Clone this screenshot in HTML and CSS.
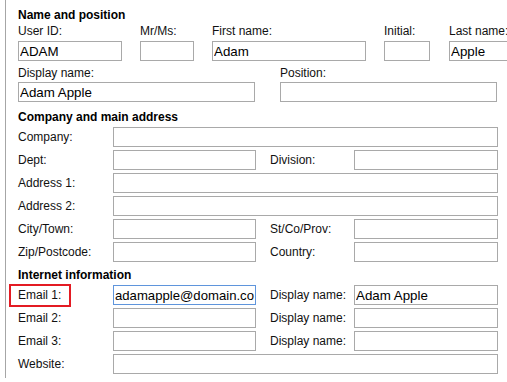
FILE: index.html
```html
<!DOCTYPE html>
<html>
<head>
<meta charset="utf-8">
<link rel="stylesheet" href="styles.css">
</head>
<body>
<div class="panel">
  <div class="section-title">Name and position</div>
  <div class="name-row">
    <div class="field w-userid"><label>User ID:</label><input class="box" value="ADAM"></div>
    <div class="field w-title"><label>Mr/Ms:</label><input class="box" value=""></div>
    <div class="field w-first"><label>First name:</label><input class="box" value="Adam"></div>
    <div class="field w-initial"><label>Initial:</label><input class="box" value=""></div>
    <div class="field w-last"><label>Last name:</label><input class="box" value="Apple"></div>
  </div>
  <div class="display-row">
    <div class="field w-display"><label>Display name:</label><input class="box" value="Adam Apple"></div>
    <div class="field w-position"><label>Position:</label><input class="box" value=""></div>
  </div>

  <div class="section-title mt-company">Company and main address</div>
  <div class="form-grid">
    <label class="lbl">Company:</label><input class="box span3" value="">
    <label class="lbl">Dept:</label><input class="box" value=""><label class="lbl lbl2">Division:</label><input class="box" value="">
    <label class="lbl">Address 1:</label><input class="box span3" value="">
    <label class="lbl">Address 2:</label><input class="box span3" value="">
    <label class="lbl">City/Town:</label><input class="box" value=""><label class="lbl lbl2">St/Co/Prov:</label><input class="box" value="">
    <label class="lbl">Zip/Postcode:</label><input class="box" value=""><label class="lbl lbl2">Country:</label><input class="box" value="">
  </div>

  <div class="section-title mt-internet">Internet information</div>
  <div class="form-grid">
    <label class="lbl highlighted">Email 1:</label><input class="box focused" value="adamapple@domain.co"><label class="lbl lbl2">Display name:</label><input class="box" value="Adam Apple">
    <label class="lbl">Email 2:</label><input class="box" value=""><label class="lbl lbl2">Display name:</label><input class="box" value="">
    <label class="lbl">Email 3:</label><input class="box" value=""><label class="lbl lbl2">Display name:</label><input class="box" value="">
    <label class="lbl">Website:</label><input class="box span3" value="">
  </div>
</div>
</body>
</html>
```
FILE: styles.css
```css
html, body {
  margin: 0;
  padding: 0;
  background: #fff;
  overflow: hidden;
}
body {
  font-family: "Liberation Sans", Arial, sans-serif;
  font-size: 12px;
  color: #111;
}
.panel {
  margin-left: 5px;
  border-left: 1px solid #a6a6a6;
  padding: 8px 0 4px 12px;
  width: 600px;
}
.section-title {
  font-weight: bold;
  line-height: 14px;
  color: #000;
}
.mt-company { margin-top: 8px; }
.mt-internet { margin-top: 6px; }

.box {
  box-sizing: border-box;
  height: 20px;
  margin: 0;
  padding: 0 1px;
  border: 1px solid #a9a9a9;
  border-radius: 0;
  background: #fff;
  font-family: "Liberation Sans", Arial, sans-serif;
  font-size: 13.33px;
  color: #000;
  outline: none;
  min-width: 0;
  width: 100%;
}
.box.focused {
  border-color: #5f95dc;
  font-size: 13.15px;
  padding-right: 0;
}

.name-row {
  display: flex;
  gap: 18px;
  margin-top: 2px;
}
.field {
  display: flex;
  flex-direction: column;
  flex: none;
}
.field label {
  line-height: 14px;
  white-space: nowrap;
}
.field .box { margin-top: 3px; }
.w-userid { width: 104px; }
.w-title { width: 54px; }
.w-first { width: 154px; }
.w-initial { width: 46px; }
.w-last { width: 104px; margin-left: 1px; }

.display-row {
  display: flex;
  gap: 25px;
  margin-top: 5px;
}
.display-row .box { margin-top: 2px; }
.w-display { width: 237px; }
.w-position { width: 217px; }

.form-grid {
  display: grid;
  grid-template-columns: 95px 143px 98px 144px;
  grid-auto-rows: 20px;
  row-gap: 3px;
  margin-top: 3px;
}
.lbl {
  align-self: center;
  line-height: 14px;
  white-space: nowrap;
}
.lbl2 { padding-left: 14px; }
.span3 { grid-column: span 3; }

.highlighted { position: relative; }
.highlighted::after {
  content: "";
  position: absolute;
  left: -9px;
  top: -4px;
  width: 62px;
  height: 23px;
  box-sizing: border-box;
  border: 2px solid #e31b23;
}
```
